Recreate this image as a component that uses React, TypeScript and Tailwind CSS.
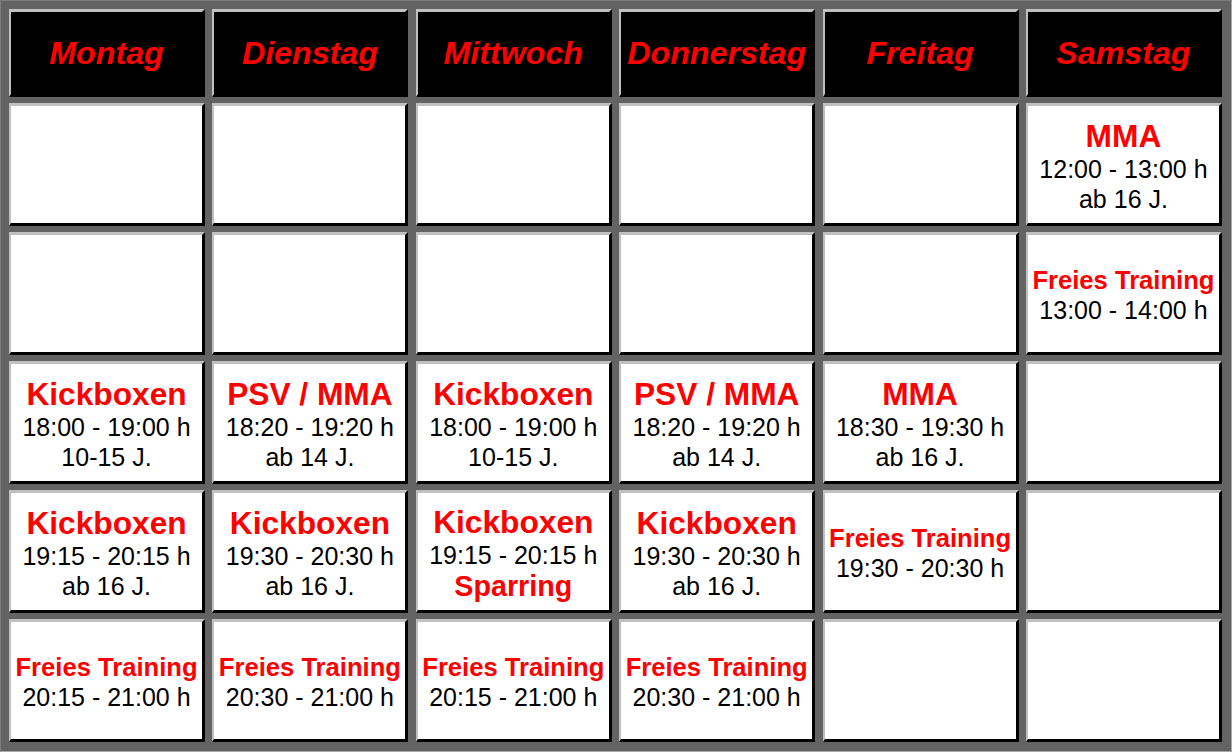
type Line = { t: string; k: 'title' | 'free' | 'sub' | 'text' };
type Slot = Line[] | null;

const days = ['Montag', 'Dienstag', 'Mittwoch', 'Donnerstag', 'Freitag', 'Samstag'];

const kurs = (name: string, zeit: string, info: string): Line[] => [
  { t: name, k: 'title' },
  { t: zeit, k: 'text' },
  { t: info, k: 'text' },
];

const frei = (zeit: string): Line[] => [
  { t: 'Freies Training', k: 'free' },
  { t: zeit, k: 'text' },
];

const rows: Slot[][] = [
  [null, null, null, null, null, kurs('MMA', '12:00 - 13:00 h', 'ab 16 J.')],
  [null, null, null, null, null, frei('13:00 - 14:00 h')],
  [
    kurs('Kickboxen', '18:00 - 19:00 h', '10-15 J.'),
    kurs('PSV / MMA', '18:20 - 19:20 h', 'ab 14 J.'),
    kurs('Kickboxen', '18:00 - 19:00 h', '10-15 J.'),
    kurs('PSV / MMA', '18:20 - 19:20 h', 'ab 14 J.'),
    kurs('MMA', '18:30 - 19:30 h', 'ab 16 J.'),
    null,
  ],
  [
    kurs('Kickboxen', '19:15 - 20:15 h', 'ab 16 J.'),
    kurs('Kickboxen', '19:30 - 20:30 h', 'ab 16 J.'),
    [
      { t: 'Kickboxen', k: 'title' },
      { t: '19:15 - 20:15 h', k: 'text' },
      { t: 'Sparring', k: 'sub' },
    ],
    kurs('Kickboxen', '19:30 - 20:30 h', 'ab 16 J.'),
    frei('19:30 - 20:30 h'),
    null,
  ],
  [
    frei('20:15 - 21:00 h'),
    frei('20:30 - 21:00 h'),
    frei('20:15 - 21:00 h'),
    frei('20:30 - 21:00 h'),
    null,
    null,
  ],
];

const cellBorder =
  'border-t-[3px] border-l-2 border-r-[3px] border-b-[3px] border-t-[#c0c0c0] border-l-[#c0c0c0] border-r-black border-b-black';

function LineText({ line }: { line: Line }) {
  if (line.k === 'title')
    return <div className="text-[31.7px] leading-[36px] font-bold text-[#ff0000]">{line.t}</div>;
  if (line.k === 'free')
    return <div className="text-[25.6px] leading-[30px] font-bold text-[#ff0000]">{line.t}</div>;
  if (line.k === 'sub')
    return <div className="text-[28.7px] leading-[32px] font-bold text-[#ff0000]">{line.t}</div>;
  return <div className="text-[25px] leading-[30px] text-black">{line.t}</div>;
}

export default function App() {
  return (
    <div
      className="w-[1232px] h-[752px] bg-[#636363] border-t border-l border-t-[#7d7d7d] border-l-[#7d7d7d] border-r border-b border-r-[#a8a8a8] border-b-[#a8a8a8] pl-[8px] pt-[8px]"
      style={{ fontFamily: '"Liberation Sans", Arial, sans-serif' }}
    >
      <div className="grid grid-cols-[repeat(6,196px)] grid-rows-[88px_repeat(5,123px)] gap-x-[7.4px] gap-y-[6px]">
        {days.map((d) => (
          <div key={d} className={`${cellBorder} bg-black flex items-center justify-center`}>
            <span className="text-[32.2px] font-bold italic text-[#ff0000]">{d}</span>
          </div>
        ))}
        {rows.map((row, r) =>
          row.map((slot, c) => (
            <div
              key={`${r}-${c}`}
              className={`${cellBorder} bg-white flex flex-col items-center justify-center text-center pt-[3px] whitespace-nowrap`}
            >
              {slot?.map((line, i) => <LineText key={i} line={line} />)}
            </div>
          ))
        )}
      </div>
    </div>
  );
}
